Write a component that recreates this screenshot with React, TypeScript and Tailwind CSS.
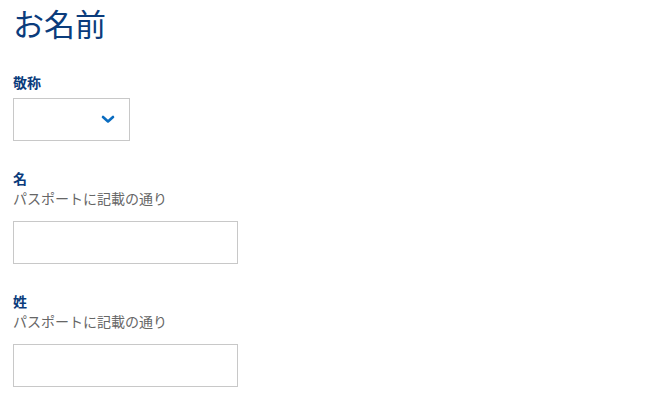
export default function App() {
  const font = { fontFamily: '"Noto Sans CJK JP", "Noto Sans", sans-serif' };
  return (
    <div className="min-h-screen bg-white pl-[13px]" style={font}>
      <h1 className="text-[31px] leading-[45px] text-[#0b3c7c]">お名前</h1>

      <div className="mt-[27px]">
        <label className="block text-[14px] font-bold leading-[20px] text-[#0b3c7c]">敬称</label>
        <div className="mt-[6px] flex h-[43px] w-[117px] items-center justify-end border border-[#c8c8c8] pr-[14px]">
          <svg width="14" height="9" viewBox="0 0 14 9" fill="none">
            <path d="M2 2l5 4.5L12 2" stroke="#0a6cc0" strokeWidth="2.6" strokeLinecap="round" strokeLinejoin="round" />
          </svg>
        </div>
      </div>

      <div className="mt-[27px]">
        <label className="block text-[14px] font-bold leading-[20px] text-[#0b3c7c]">名</label>
        <p className="text-[14px] leading-[20px] text-[#666]">パスポートに記載の通り</p>
        <input className="mt-[13px] block h-[43px] w-[225px] border border-[#c8c8c8] px-2 outline-none" />
      </div>

      <div className="mt-[27px]">
        <label className="block text-[14px] font-bold leading-[20px] text-[#0b3c7c]">姓</label>
        <p className="text-[14px] leading-[20px] text-[#666]">パスポートに記載の通り</p>
        <input className="mt-[13px] block h-[43px] w-[225px] border border-[#c8c8c8] px-2 outline-none" />
      </div>
    </div>
  );
}
